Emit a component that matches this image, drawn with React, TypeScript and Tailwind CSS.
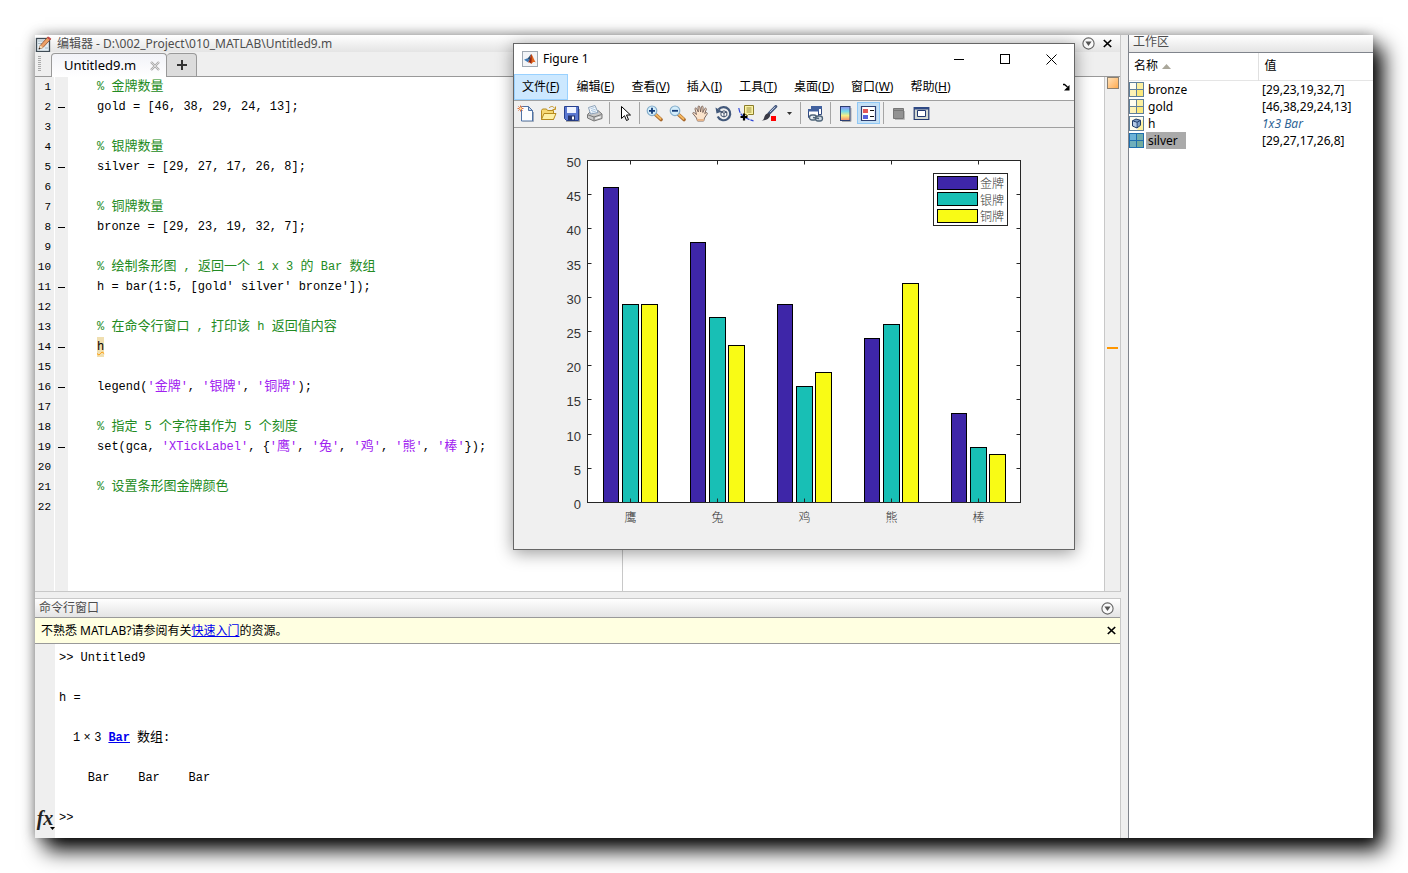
import type { ReactNode } from "react";

const uiFont = "font-['Noto_Sans','Noto_Sans_CJK_SC',sans-serif]";
const codeFont = "font-['Liberation_Mono','Noto_Sans_CJK_SC',monospace]";

type Token = { text: string; color?: "comment" | "string" | "warn" };
type CodeLine = { run?: boolean; tokens: Token[] };

const tokenColor: Record<string, string> = {
  comment: "text-[#228b22]",
  string:  "text-[#a020f0]",
  warn:    "inline-block bg-[#f0dfb0] underline decoration-wavy decoration-1 decoration-[#ff9600]",
};

const c = (text: string): CodeLine => ({ tokens: [{ text, color: "comment" }] });
const empty: CodeLine = { tokens: [] };

// strings between quotes are coloured, everything else stays black
const code = (text: string): CodeLine => ({
  run: true,
  tokens: text.split(/('[^']*')/).filter(Boolean).map((t) => (
    t.startsWith("'") ? { text: t, color: "string" as const } : { text: t }
  )),
});
const plain = (text: string): CodeLine => ({ run: true, tokens: [{ text }] });

const lines: CodeLine[] = [
  c("% 金牌数量"),
  plain("gold = [46, 38, 29, 24, 13];"),
  empty,
  c("% 银牌数量"),
  plain("silver = [29, 27, 17, 26, 8];"),
  empty,
  c("% 铜牌数量"),
  plain("bronze = [29, 23, 19, 32, 7];"),
  empty,
  c("% 绘制条形图 , 返回一个 1 x 3 的 Bar 数组"),
  plain("h = bar(1:5, [gold' silver' bronze']);"),
  empty,
  c("% 在命令行窗口 , 打印该 h 返回值内容"),
  { run: true, tokens: [{ text: "h", color: "warn" }] },
  empty,
  code("legend('金牌', '银牌', '铜牌');"),
  empty,
  c("% 指定 5 个字符串作为 5 个刻度"),
  code("set(gca, 'XTickLabel', {'鹰', '兔', '鸡', '熊', '棒'});"),
  empty,
  c("% 设置条形图金牌颜色"),
  empty,
];

const variables = [
  { name: "bronze", value: "[29,23,19,32,7]" },
  { name: "gold",   value: "[46,38,29,24,13]" },
  { name: "h",      value: "1x3 Bar", object: true },
  { name: "silver", value: "[29,27,17,26,8]", selected: true },
];

const menus = [
  ["文件", "F"], ["编辑", "E"], ["查看", "V"], ["插入", "I"],
  ["工具", "T"], ["桌面", "D"], ["窗口", "W"], ["帮助", "H"],
];

const series = [
  { name: "金牌", fill: "#3e26a8", data: [46, 38, 29, 24, 13] },
  { name: "银牌", fill: "#18bfb5", data: [29, 27, 17, 26, 8] },
  { name: "铜牌", fill: "#f9fb15", data: [29, 23, 19, 32, 7] },
];
const categories = ["鹰", "兔", "鸡", "熊", "棒"];

/* ---------- small glyphs ---------- */

function CloseGlyph() {
  return (
    <svg width="9" height="9" viewBox="0 0 9 9" stroke="#000" strokeWidth="1.7">
      <path d="M.8 1l7.4 7M8.2 1L.8 8" />
    </svg>
  );
}

function MenuGlyph() {
  return (
    <svg width="13" height="13" viewBox="0 0 13 13">
      <circle cx="6.5" cy="6.5" r="5.6" fill="#fafafa" stroke="#666" strokeWidth="1.1" />
      <path d="M3.4 4.6h6.2L6.5 9z" fill="#555" />
    </svg>
  );
}

function EditorIcon() {
  return (
    <svg width="17" height="16" viewBox="0 0 17 16">
      <rect x="1.5" y="2.5" width="13" height="13" fill="#e3edf3" stroke="#3f4b54" strokeWidth="1.3" />
      <path d="M3 5h6M3 7.500h4M10 12h3" stroke="#a9bac4" />
      <path d="M4 13l1.300-3.600L12.800 1l2.700 2.300L8 11.500z" fill="#eda066" stroke="#8a4d2a" strokeWidth=".8" />
      <path d="M4 13l1.300-3.600L8 11.500z" fill="#f6dfb8" />
      <path d="M3.600 13.400l.6-1.800 1.300 1.100z" fill="#222" />
      <path d="M12 1.900L13.300.5l3 2.300-1.400 1.500z" fill="#c44a4a" />
    </svg>
  );
}

function MatlabIcon() {
  return (
    <svg width="16" height="16" viewBox="0 0 16 16">
      <rect x=".5" y=".5" width="15" height="15" fill="#f2f4f7" stroke="#9fa8b2" />
      <path d="M2 8.800l3.400-1.500 2.400 2-1.900 2z" fill="#3b78b5" />
      <path d="M5.400 7.300C7 6.600 8 4.200 9.200 3L7.800 9.300z" fill="#27496d" />
      <path d="M9.200 3c1.600 1.300 2.600 6 4.800 8.400-2-.9-3.200-.6-4.800 1.600-.5-1.200-1.500-1.900-3.300-1.700C8 10 8.500 6 9.200 3z" fill="#e2661e" />
      <path d="M9.200 3c.7 2.600.6 6.500 0 10-.5-1.200-1.500-1.900-3.300-1.700C8 10 8.500 6 9.200 3z" fill="#8f2413" />
    </svg>
  );
}

function VarIcon({ object, selected }: { object?: boolean; selected?: boolean }) {
  const line = selected ? "#1f6fae" : "#5f7f9a";
  const fill = selected ? "#6db3d8" : "#fffdf0";
  const tint = selected ? "#72ab9d" : "#fbe87c";
  return (
    <svg width="15" height="15" viewBox="0 0 15 15">
      <rect x=".5" y=".5" width="14" height="14" fill={fill} stroke={line} />
      {object ? (
        <>
          <path d="M8 14h6V3z" fill="#fff1a0" />
          <path d="M3.500 4.800L7 3l4.500 1.300v5L8 12 3.500 10z" fill="#7c9cc8" stroke="#1f3a66" />
          <path d="M3.500 4.800L8 6.300l3.500-2M8 6.300V12" fill="none" stroke="#1f3a66" />
          <path d="M4 5.500l3.500 1.200v4.500L4 9.500z" fill="#b7cbe6" />
        </>
      ) : (
        <>
          <rect x="8" y="8" width="6" height="6" fill={tint} />
          <rect x="8" y="1" width="6" height="6" fill={tint} opacity=".7" />
          <rect x="1" y="8" width="6" height="6" fill={tint} opacity=".5" />
          <path d="M7.500 1v13M1 7.500h13" stroke={line} />
        </>
      )}
    </svg>
  );
}

/* ---------- figure toolbar ---------- */

function Tool({ label, active, children }: { label: string; active?: boolean; children: ReactNode }) {
  return (
    <button
      type="button"
      aria-label={label}
      className={`flex h-[22px] w-[23px] items-center justify-center border ${active ? "border-[#90c8f6] bg-[#c5e0f5]" : "border-transparent"}`}
    >
      <svg width="17" height="17" viewBox="0 0 17 17" fill="none" className="shrink-0">{children}</svg>
    </button>
  );
}

const Separator = () => <div className="mx-[3px] h-[22px] w-px bg-[#a5a5a5]" />;

function Magnifier({ plus }: { plus?: boolean }) {
  return (
    <>
      <path d="M9.500 9.500l5.500 5" stroke="#a8672a" strokeWidth="3.600" strokeLinecap="round" />
      <path d="M9.500 9.200l5 4.600" stroke="#f4b860" strokeWidth="2" strokeLinecap="round" />
      <circle cx="6" cy="5.800" r="4.800" fill="#d3edfb" stroke="#86aecb" strokeWidth="1.200" />
      <path d={plus ? "M3 5.800h6M6 2.800v6" : "M3 5.800h6"} stroke="#143c78" strokeWidth="1.800" />
    </>
  );
}

function FigureToolbar() {
  return (
    <div className="flex h-[27px] items-start border-b border-[#a0a0a0] bg-[#f0f0f0] pt-px">
      <Tool label="新建图窗">
        <path d="M4.500 1.500h7l4 4v10.500h-11z" fill="#fbfdff" stroke="#4f72a6" />
        <path d="M6 16.500h10.500V7" stroke="#9ba8ba" />
        <path d="M11.500 1.500v4h4z" fill="#c5d6ec" stroke="#4f72a6" />
        <path d="M3.500.5v6M.5 3.500h6M1.400 1.400l4.200 4.200M5.600 1.400L1.400 5.600" stroke="#dd6a42" />
        <circle cx="3.500" cy="3.500" r="1.200" fill="#ffe9a0" />
      </Tool>
      <Tool label="打开文件">
        <path d="M1.500 14.500v-9l1-1.500h4l1 1.500h6v9z" fill="#f6d873" stroke="#b58a1f" />
        <path d="M9 3c2-2.200 4.500-2 5.500.5M15.500 1.500v3h-3" stroke="#c49424" />
        <path d="M1.500 14.500l2.500-6h12l-2.500 6z" fill="#fdf0a6" stroke="#b58a1f" />
      </Tool>
      <Tool label="保存图窗">
        <path d="M3 16.500h13.500V4" stroke="#aaa" />
        <path d="M1.500 1.500h14v14h-12l-2-2z" fill="#5b78d0" stroke="#27408f" />
        <rect x="4" y="2" width="9" height="6" fill="#eef3ff" />
        <rect x="5" y="10.500" width="7" height="5" fill="#27366d" />
        <rect x="9" y="11.500" width="2" height="3" fill="#fff" />
      </Tool>
      <Tool label="打印图窗">
        <path d="M1.500 9.500L4 7l8-1.500 4 3.500v4.500L8 16l-6.500-3z" fill="#c9c9c9" stroke="#777" />
        <path d="M4.500 9L2.500 2.500l6.500-2L12 7.500z" fill="#f7fbff" stroke="#8aa0b8" />
        <path d="M4.500 3.700l4-1.200M5 5.500l4.500-1.200M5.700 7.200L10 6" stroke="#a9c4de" />
        <path d="M2 9.800l6 2.200 7.500-2.500M8 12v3.500" stroke="#777" />
        <path d="M9.500 13.500l5-1.500" stroke="#fff" />
      </Tool>
      <Separator />
      <Tool label="编辑绘图">
        <path d="M5.500 1.500v12l3-2.800 2 4.800 2-.9-2-4.600h4z" fill="#fff" stroke="#000" />
      </Tool>
      <Separator />
      <Tool label="放大"><Magnifier plus /></Tool>
      <Tool label="缩小"><Magnifier /></Tool>
      <Tool label="平移">
        <path
          d="M5.500 16l-1-3-3.600-4.400c-.5-1 .8-1.500 1.600-.7L4.500 9.500 3 4c-.2-1.300 1.300-1.500 1.700-.4L6.300 7 6 2c0-1.300 1.600-1.300 1.800 0l.8 5 .8-5c.2-1.200 1.800-1.100 1.700.2L10.800 7.500l1.800-3.800c.6-1.100 2-.5 1.700.6l-1.600 4.400 1-.8c1-.8 2.200.2 1.400 1.200L12.500 13l-.8 3z"
          fill="#fbe3cb" stroke="#735b52" strokeWidth=".9"
        />
        <path d="M5.500 16l-.6-2h7.300l-.5 2z" fill="#e6b489" />
      </Tool>
      <Tool label="三维旋转">
        <path d="M3.500 4.500a6.600 6.600 0 1 1-.8 7" stroke="#43597b" strokeWidth="2.200" />
        <path d="M.5 2.500l1 6 5.500-2z" fill="#43597b" />
        <path d="M6 7l3-1.200L11.800 7v3.600L9 12l-3-1.400zM6 7l3 1.200L11.800 7M9 8.200V12" fill="#fff" stroke="#2b3c58" strokeWidth=".9" />
      </Tool>
      <Tool label="数据游标">
        <path d="M.8 3c1 6.500 4 10 14.700 12.800" stroke="#2d45d8" strokeWidth="1.200" strokeDasharray="5 1" />
        <path d="M6.500.5h9v9h-5l-2 2v-2h-2z" fill="#fbf3a4" stroke="#8b7d2b" />
        <path d="M8.500 3h5M8.500 5h5M8.500 7h5" stroke="#9c8f3c" />
        <path d="M2.500 12h7M6 8.500v7" stroke="#000" strokeWidth="2.200" />
      </Tool>
      <Tool label="刷亮">
        <path d="M14.800 1.500L8 8.500" stroke="#44577c" strokeWidth="3" strokeLinecap="round" />
        <path d="M14.300 1.800L9 7" stroke="#b9c9e4" />
        <path d="M.5 15.500c2-.3 2.200-1.500 3-4C4.500 9 6.500 8 8 8.300c1.500.7 1.500 2.700 0 4.500-1.600 1.800-4 2.700-7.500 2.700z" fill="#3a3a46" />
        <rect x="10" y="11" width="5" height="5" fill="#f00" />
      </Tool>
      <button type="button" aria-label="刷亮选项" className="flex h-[22px] w-4 items-center justify-center">
        <svg width="5" height="3" viewBox="0 0 5 3"><path d="M0 0h5L2.500 3z" fill="#333" /></svg>
      </button>
      <Separator />
      <Tool label="链接绘图">
        <path d="M4.500 1.500h10v8h-10z" fill="#fff" stroke="#324a80" />
        <path d="M4 1h11v3H4z" fill="#41619f" />
        <path d="M1.500 4.500h10v8h-10z" fill="#fff" stroke="#324a80" />
        <path d="M1 4h11v2.500H1z" fill="#41619f" />
        <rect x="2.500" y="10" width="7" height="5" rx="2.500" fill="#e6edf2" stroke="#4e6478" strokeWidth="1.300" />
        <rect x="8.500" y="11" width="7" height="5" rx="2.500" fill="#d0dbe4" stroke="#4e6478" strokeWidth="1.300" />
        <path d="M6 12.500l6 1" stroke="#4e6478" strokeWidth="1.500" />
      </Tool>
      <Separator />
      <Tool label="插入颜色栏">
        <defs>
          <linearGradient id="jet" x1="0" x2="0" y1="0" y2="1">
            <stop offset="0" stopColor="#8f8df0" />
            <stop offset=".35" stopColor="#74dcea" />
            <stop offset=".65" stopColor="#f6ef83" />
            <stop offset="1" stopColor="#f0876c" />
          </linearGradient>
        </defs>
        <path d="M5 16.500h9V3" stroke="#aaa" />
        <rect x="3.500" y="1.500" width="9.500" height="14" fill="url(#jet)" stroke="#2c3f72" />
      </Tool>
      <Tool label="插入图例" active>
        <path d="M1.500 1.500h14v14h-14z" fill="#fff" stroke="#2c3f72" strokeWidth="1.200" />
        <rect x="3" y="4" width="5" height="4" fill="#e25757" />
        <rect x="3" y="10" width="5" height="4" fill="#5560dd" />
        <path d="M10 5.500h4M10 11.500h4" stroke="#111" strokeWidth="1.200" />
      </Tool>
      <Separator />
      <Tool label="隐藏绘图工具">
        <path d="M5 14.500h9.500V6" stroke="#bbb" />
        <path d="M3.500 3.500h10v10h-10z" fill="#929292" stroke="#777" />
        <path d="M4 5.500h9" stroke="#777" />
      </Tool>
      <Tool label="显示绘图工具">
        <path d="M1.200 2.500h14.600v12H1.200z" fill="#d5dad3" stroke="#23396f" strokeWidth="1.200" />
        <path d="M1 2h15v2.500H1z" fill="#2e4985" />
        <path d="M4.500 5.500h8v6h-8z" fill="#fff" stroke="#23396f" />
      </Tool>
    </div>
  );
}

/* ---------- bar chart ---------- */

const X0 = 73.5, X1 = 506.5, Y0 = 374.5, Y1 = 32.5;
const yOf = (v: number) => Math.floor(Y0 - (v / 50) * (Y0 - Y1)) + 0.5;
const xOf = (i: number) => 116.5 + 87 * i;

function BarChart() {
  const ticks = Array.from({ length: 11 }, (_, i) => i * 5);
  return (
    <svg width="560" height="421" viewBox="0 0 560 421" role="img" aria-label="Figure 1">
      <rect x={X0} y={Y1} width={X1 - X0} height={Y0 - Y1} fill="#fff" />
      {series.map((s, k) => s.data.map((v, i) => (
        <rect
          key={`${k}-${i}`}
          x={xOf(i) - 27 + k * 19}
          y={yOf(v)}
          width={k === 0 ? 15 : 16}
          height={Y0 - yOf(v)}
          fill={s.fill}
          stroke="#000"
        />
      )))}
      <rect x={X0} y={Y1} width={X1 - X0} height={Y0 - Y1} fill="none" stroke="#262626" />
      {ticks.map((t) => (
        <g key={t}>
          <path d={`M${X0} ${yOf(t)}h4M${X1} ${yOf(t)}h-4`} stroke="#262626" />
          <text x="67" y={yOf(t) + 6} textAnchor="end" fontSize="13" fill="#333" className="font-['Liberation_Sans',sans-serif]">{t}</text>
        </g>
      ))}
      {categories.map((name, i) => (
        <g key={name}>
          <path d={`M${xOf(i)} ${Y0}v-4M${xOf(i)} ${Y1}v4`} stroke="#262626" />
          <text x={xOf(i)} y="394" textAnchor="middle" fontSize="12" fill="#333" className="font-['Noto_Sans_CJK_SC',sans-serif] font-light">{name}</text>
        </g>
      ))}
      <rect x="419.500" y="45.500" width="74" height="52" fill="#fff" stroke="#262626" />
      {series.map((s, k) => (
        <g key={s.name}>
          <rect x="423.500" y={48.5 + k * 16.5 - (k === 1 ? 0.5 : 0)} width="40" height="13" fill={s.fill} stroke="#000" />
          <text x="466" y={60 + k * 16.5} fontSize="12" fill="#333" className="font-['Noto_Sans_CJK_SC',sans-serif] font-light">{s.name}</text>
        </g>
      ))}
    </svg>
  );
}

function FigureWindow() {
  return (
    <div className="absolute top-2 left-[478px] flex flex-col border border-[#666] bg-[#f0f0f0] shadow-[0_3px_16px_rgba(0,0,0,0.4)]">
      <div className="flex h-[30px] items-center bg-white pl-2">
        <MatlabIcon />
        <h2 className="ml-[5px] flex-1 text-[12px]">Figure 1</h2>
        <button type="button" aria-label="最小化" className="flex h-full w-[46px] items-center justify-center">
          <svg width="10" height="10" stroke="#000"><path d="M0 5.500h10" /></svg>
        </button>
        <button type="button" aria-label="最大化" className="flex h-full w-[46px] items-center justify-center">
          <svg width="10" height="10" stroke="#000" fill="none"><rect x=".5" y=".5" width="9" height="9" /></svg>
        </button>
        <button type="button" aria-label="关闭" className="flex h-full w-[46px] items-center justify-center">
          <svg width="11" height="11" stroke="#000"><path d="M.5.5l10 10M10.500.5l-10 10" /></svg>
        </button>
      </div>
      <nav className="flex h-[27px] border-b border-[#a0a0a0] bg-white">
        {menus.map(([label, key], i) => (
          <button
            key={key}
            type="button"
            className={`border pr-2 pl-[7px] text-[12px] ${i === 0 ? "border-[#99d1ff] bg-[#cce8ff]" : "border-transparent"}`}
          >
            {label}(<u>{key}</u>)
          </button>
        ))}
        <button type="button" aria-label="停靠图窗" className="ml-auto px-1">
          <svg width="8" height="8" viewBox="0 0 8 8"><path d="M1 1.500h1.500l3 2.500" fill="none" stroke="#000" strokeWidth="1.400" /><path d="M7.500 2v5.500H2z" /></svg>
        </button>
      </nav>
      <FigureToolbar />
      <BarChart />
    </div>
  );
}

/* ---------- panels ---------- */

// Han characters sit on a slightly wider grid than the latin ones
function Mixed({ text }: { text: string }) {
  return (
    <>
      {text.split(/([\u4e00-\u9fff]+)/).map((part, i) => (
        i % 2 ? <span key={i} className="text-[13px]">{part}</span> : part
      ))}
    </>
  );
}

function Editor() {
  return (
    <section className="flex flex-1 flex-col border-r border-b border-[#c8c8c8]">
      <header className="flex h-[17px] items-center bg-linear-to-b from-white to-[#e4e4e4] pr-2">
        <EditorIcon />
        <h1 className="ml-[5px] flex-1 text-[12px] leading-4 text-[#4d4d4d]">编辑器 - D:\002_Project\010_MATLAB\Untitled9.m</h1>
        <button type="button" aria-label="编辑器操作" className="mr-2"><MenuGlyph /></button>
        <button type="button" aria-label="关闭编辑器"><CloseGlyph /></button>
      </header>

      <div className="flex h-[25px] items-end border-b border-[#999] bg-[#efefef] pl-[3px]">
        <div className="mr-[10px] mb-1 h-4 w-[3px] bg-[repeating-linear-gradient(#aaa_0_1px,transparent_1px_2px)]" />
        <div role="tab" className="-mb-px flex h-6 w-[116px] items-center rounded-t-[4px] border border-b-0 border-[#999] bg-linear-to-b from-[#f2f3f8] to-white pl-3">
          <span className="flex-1 text-[13px]">Untitled9.m</span>
          <button type="button" aria-label="关闭 Untitled9.m" className="mr-1.5">
            <svg width="10" height="10" viewBox="0 0 10 10"><path d="M1 1l8 8M9 1L1 9" stroke="#aaa" strokeWidth="2.400" /><path d="M1 1l8 8M9 1L1 9" stroke="#eee" strokeWidth=".7" /></svg>
          </button>
        </div>
        <button type="button" aria-label="新建文件" className="flex h-[23px] w-[30px] items-center justify-center rounded-t-[4px] border border-b-0 border-l-0 border-[#999] bg-[#dcdcdc]">
          <svg width="10" height="10" stroke="#333" strokeWidth="2"><path d="M0 5h10M5 0v10" /></svg>
        </button>
      </div>

      <div className={`relative flex flex-1 bg-white text-[12px] leading-5 ${codeFont}`}>
        <div className="absolute inset-y-0 left-[587px] w-px bg-[#c8c8c8]" />
        <ol className="w-5 border-r border-white bg-[#efefef] pr-[3px] text-right text-[11px]">
          {lines.map((_, i) => <li key={i} className="flex h-5 justify-end">{i + 1}</li>)}
        </ol>
        <div className="w-[13px] bg-[#efefef] pl-[3px]">
          {lines.map((line, i) => (
            <div key={i} className="flex h-5 items-center">{line.run && <span className="h-px w-[7px] bg-black" />}</div>
          ))}
        </div>
        <pre className={`relative flex-1 pl-[29px] ${codeFont}`}>
          {lines.map((line, i) => (
            <div key={i} className="h-5">
              {line.tokens.map((t, j) => (
                <span key={j} className={t.color ? tokenColor[t.color] : ""}><Mixed text={t.text} /></span>
              ))}
            </div>
          ))}
        </pre>
        <div className="flex w-4 flex-col items-center border-l border-[#c8c8c8] bg-[#efefef]">
          <div className="h-3 w-3 border border-[#8c8070] bg-linear-to-br from-[#ffe0b5] to-[#ffab4d]" />
          <div className="mt-[258px] h-0.5 w-[11px] bg-[#ff9600]" />
        </div>
      </div>
    </section>
  );
}

function CommandWindow() {
  return (
    <section className="mt-1.5 border-t border-r border-[#c8c8c8]">
      <header className="flex h-[19px] items-center border-b border-[#999] bg-linear-to-b from-white to-[#e4e4e4] pr-1.5 pl-1">
        <h2 className="flex-1 text-[12px] leading-4 text-[#4d4d4d]">命令行窗口</h2>
        <button type="button" aria-label="命令行窗口操作"><MenuGlyph /></button>
      </header>
      <div className="flex h-[26px] items-center border-b border-[#999] bg-[#ffffe1] pr-1 pl-1.5 text-[12px]">
        <p className="flex-1">不熟悉 MATLAB?请参阅有关<a href="#start" className="text-[#0000ee] underline">快速入门</a>的资源。</p>
        <button type="button" aria-label="关闭提示"><CloseGlyph /></button>
      </div>
      <div className={`flex bg-white text-[12px] leading-5 ${codeFont}`}>
        <div className="flex w-5 flex-col justify-end bg-[#efefef] pb-2">
          <button type="button" aria-label="函数浏览器" className="relative h-6 font-['Liberation_Serif',serif] text-[20px] leading-6 font-bold text-[#222] italic">
            fx
            <svg width="5" height="3" viewBox="0 0 5 3" className="absolute right-0 bottom-0"><path d="M0 0h5L2.500 3z" fill="#000" /></svg>
          </button>
        </div>
        <div className="flex-1 pt-1 pb-[10px] pl-1">
          <pre className={`h-20 ${codeFont}`}>{">> Untitled9\n\nh ="}</pre>
          <div className="flex h-10 gap-[7px] pl-3.5">
            <span className="flex">1<span className="w-3.5 text-center">×</span>3</span>
            <a href="#bar" className="font-bold text-[#0000ee] underline">Bar</a>
            <span><Mixed text="数组:" /></span>
          </div>
          <pre className={`h-10 ${codeFont}`}>{"    Bar    Bar    Bar"}</pre>
          <label className="flex h-5">
            <span className="w-5">{">>"}</span>
            <input type="text" aria-label="命令" className="flex-1 bg-transparent outline-none" />
          </label>
        </div>
      </div>
    </section>
  );
}

function Workspace() {
  return (
    <aside className="ml-[7px] flex w-[245px] flex-col border-l border-[#80848c] bg-white">
      <header className="flex h-[18px] items-start border-b border-[#80848c] bg-linear-to-b from-white to-[#e4e4e4] pl-1">
        <h2 className="text-[12px] leading-[14px] text-[#4d4d4d]">工作区</h2>
      </header>
      <table className="w-full table-fixed border-collapse text-left text-[12px]">
        <thead>
          <tr className="h-[27px] border-b border-[#e5e5e5]">
            <th className="w-[129px] border-r border-[#e0e0e0] pl-[5px] font-normal">
              <span className="flex items-center gap-1">
                名称
                <svg width="9" height="5" viewBox="0 0 9 5"><path d="M0 5h9L4.500 0z" fill="#aaa79a" /></svg>
              </span>
            </th>
            <th className="pl-1.5 font-normal">值</th>
          </tr>
        </thead>
        <tbody>
          {variables.map((v) => (
            <tr key={v.name} className="h-[17px] leading-[17px]">
              <td className="p-0">
                <span className="flex h-[17px] items-center gap-0.5">
                  <VarIcon object={v.object} selected={v.selected} />
                  <span className={`pl-0.5 ${v.selected ? "bg-[#aaa] pr-2" : ""}`}>{v.name}</span>
                </span>
              </td>
              <td className={`p-0 pl-1 ${v.object ? "text-[#2f6496] italic" : ""}`}>{v.value}</td>
            </tr>
          ))}
        </tbody>
      </table>
    </aside>
  );
}

export default function App() {
  return (
    <div className={`flex min-h-screen bg-white p-[35px] text-black ${uiFont}`}>
      <main className="flex flex-1 bg-[#efefef] shadow-[10px_12px_20px_#000,0_0_12px_rgba(0,0,0,0.35)]">
        <div className="relative flex flex-1 flex-col">
          <Editor />
          <CommandWindow />
          <FigureWindow />
        </div>
        <Workspace />
      </main>
    </div>
  );
}
